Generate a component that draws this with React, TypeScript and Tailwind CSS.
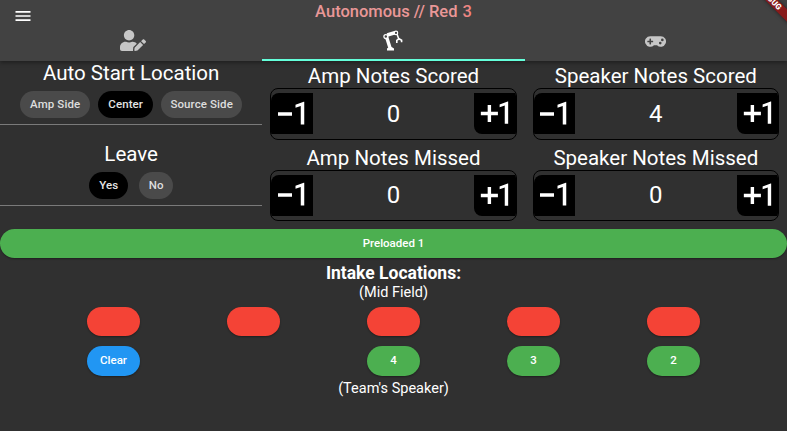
import type { ReactNode } from "react";
import { FaGamepad, FaUserEdit } from "react-icons/fa";
import { MdExposureNeg1, MdExposurePlus1, MdMenu } from "react-icons/md";

function RobotArm() {
  return (
    <svg viewBox="0 0 22 22" className="h-[22px] w-[22px]" fill="none">
      <path d="M4.6 7 L7.9 17.5" stroke="#fff" strokeWidth="3.4" />
      <path d="M5.2 5 L13.6 2.6" stroke="#fff" strokeWidth="3.6" />
      <path d="M14.6 3 L16.8 9" stroke="#fff" strokeWidth="1.5" />
      <path d="M5 20.4 V18.6 L7 17 H9.6 L12 18.6 V20.4 Z" fill="#fff" />
      <path d="M14.8 13 V10.4 L17 8.8 L19.6 10.2 V12.2" stroke="#fff" strokeWidth="1.6" />
      <circle cx="3.8" cy="6.6" r="1.9" fill="#424242" stroke="#fff" strokeWidth="1.3" />
      <circle cx="14" cy="2.9" r="1.7" fill="#424242" stroke="#fff" strokeWidth="1.2" />
    </svg>
  );
}

function Chip({ children, selected = false, width }: { children: ReactNode; selected?: boolean; width: string }) {
  return (
    <button
      className={`flex h-[27px] items-center justify-center rounded-full text-[11.5px] font-medium tracking-[0.1px] ${width} ${
        selected ? "bg-black text-[#e4e4e4]" : "bg-[#4a4a4a] text-[#dedede]"
      }`}
    >
      {children}
    </button>
  );
}

function Counter({ title, value }: { title: string; value: number }) {
  return (
    <section className="flex h-[81.5px] flex-col px-2">
      <h2 className="h-[27px] whitespace-nowrap pt-px text-center text-[20.5px] leading-[28px] text-white">{title}</h2>
      <div className="flex h-[51.5px] items-center justify-between overflow-hidden rounded-lg border-[1.5px] border-black">
        <button className="flex h-[41px] w-[41.5px] items-center justify-center rounded-tl-lg bg-black text-white">
          <MdExposureNeg1 className="h-[42px] w-[42px] shrink-0" />
        </button>
        <span className="text-[24px] text-white">{value}</span>
        <button className="flex h-[41px] w-[41.5px] items-center justify-center rounded-bl-lg bg-black text-white">
          <MdExposurePlus1 className="h-[41px] w-[41px] shrink-0" />
        </button>
      </div>
    </section>
  );
}

function Pill({ children, color }: { children?: ReactNode; color: string }) {
  return (
    <button
      className={`flex h-[29.5px] w-[53px] items-center justify-center rounded-full text-[11.5px] font-medium text-white shadow-[0_1px_2px_rgba(0,0,0,0.35)] ${color}`}
    >
      {children}
    </button>
  );
}

export default function App() {
  return (
    <div className="relative h-[431px] w-[787px] overflow-hidden bg-[#303030] font-[Roboto,sans-serif]">
      <header className="relative h-[61px] bg-[#424242] shadow-[0_2px_4px_rgba(0,0,0,0.35)]">
        <div className="grid h-[24px] grid-cols-3">
          <button className="pl-[13px] pt-[6px] text-white">
            <MdMenu className="h-[20px] w-[20px]" />
          </button>
          <h1 className="flex justify-center gap-[5px] whitespace-nowrap text-[16.5px] font-medium leading-[23px] text-[#e99797]">
            <span>Autonomous // Red</span>
            <span className="text-[#ef8683]">3</span>
          </h1>
        </div>
        <nav className="grid h-[37px] grid-cols-3">
          <div className="flex justify-center pl-1 pt-[6px] text-[#c6c6c6]">
            <FaUserEdit className="h-[21px] w-[26px]" />
          </div>
          <div className="flex justify-center border-b-2 border-[#64ffda] pt-[6px]">
            <RobotArm />
          </div>
          <div className="flex justify-center pt-[7px] text-[#c6c6c6]">
            <FaGamepad className="h-[21px] w-[21px]" />
          </div>
        </nav>
      </header>

      <main>
        <div className="grid h-[167.5px] grid-cols-3">
          <div>
            <section className="flex h-[63.5px] flex-col border-b border-[#7a7a7a]">
              <h2 className="h-[30px] text-center text-[20.5px] leading-[24px] text-white">Auto Start Location</h2>
              <div className="flex justify-center gap-2">
                <Chip width="w-[70px]">Amp Side</Chip>
                <Chip width="w-[55px]" selected>Center</Chip>
                <Chip width="w-[81px]">Source Side</Chip>
              </div>
            </section>
            <section className="flex h-[81.5px] flex-col border-b border-[#7a7a7a] pt-[17.5px]">
              <h2 className="h-[30px] text-center text-[20.5px] leading-[24px] text-white">Leave</h2>
              <div className="flex justify-center gap-[11px]">
                <Chip width="w-[39px]" selected>Yes</Chip>
                <Chip width="w-[34px]">No</Chip>
              </div>
            </section>
          </div>
          <div>
            <Counter title="Amp Notes Scored" value={0} />
            <Counter title="Amp Notes Missed" value={0} />
          </div>
          <div>
            <Counter title="Speaker Notes Scored" value={4} />
            <Counter title="Speaker Notes Missed" value={0} />
          </div>
        </div>

        <button className="flex h-[29.5px] w-full items-center justify-center rounded-full bg-[#4caf50] text-[11.5px] font-medium text-white shadow-[0_1px_2px_rgba(0,0,0,0.35)]">
          Preloaded 1
        </button>

        <section className="flex flex-col text-center text-white">
          <h2 className="h-[25px] pt-[3px] text-[17.5px] font-bold leading-6">Intake Locations:</h2>
          <p className="h-[23.5px] text-[14.5px] leading-[20px]">(Mid Field)</p>
          <div className="grid grid-cols-5 justify-items-center gap-y-[10px] px-[43.5px]">
            <Pill color="bg-[#f44336]" />
            <Pill color="bg-[#f44336]" />
            <Pill color="bg-[#f44336]" />
            <Pill color="bg-[#f44336]" />
            <Pill color="bg-[#f44336]" />
            <Pill color="bg-[#2196f3]">Clear</Pill>
            <span />
            <Pill color="bg-[#4caf50]">4</Pill>
            <Pill color="bg-[#4caf50]">3</Pill>
            <Pill color="bg-[#4caf50]">2</Pill>
          </div>
          <p className="pt-[3px] text-[14.5px] leading-[20px]">(Team's Speaker)</p>
        </section>
      </main>

      <div className="absolute left-[741px] top-[-5px] flex h-[9px] w-[60px] rotate-45 items-center justify-center bg-[#881b1b] text-[8px] font-black leading-none text-white shadow-[0_0_4px_rgba(0,0,0,0.5)]">
        DEBUG
      </div>
    </div>
  );
}
